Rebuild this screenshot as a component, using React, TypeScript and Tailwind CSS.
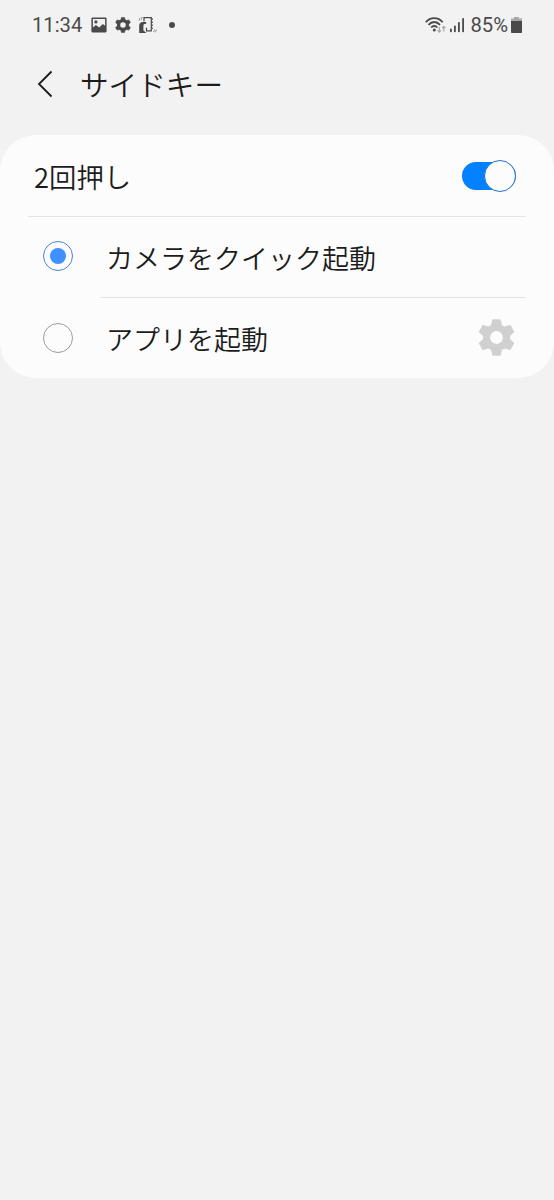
import { useState } from 'react';

const TOOTH_ANGLES = [0, 60, 120, 180, 240, 300];

function Gear({ className }: { className: string }) {
  return (
    <svg className={className} viewBox="-18.5 -18.5 37 37" fill="currentColor" stroke="currentColor">
      <circle r="10" fill="none" strokeWidth="7.200" />
      {TOOTH_ANGLES.map((angle) => (
        <path
          key={angle}
          d="M-3.500-17.600h7L4.700-12.500 6.200-9.500h-12.400l1.500-3Z"
          strokeWidth="1.400"
          strokeLinejoin="round"
          transform={`rotate(${angle})`}
        />
      ))}
    </svg>
  );
}

function StatusBar() {
  return (
    <div className="flex h-[50px] items-center pl-[32px] pr-[32px] text-[#4a4a4a]">
      <span className="w-[50px] font-[Roboto] text-[20.2px] leading-6 whitespace-nowrap">11:34</span>
      <svg className="ml-[9px] h-4 w-4 shrink-0" viewBox="0 0 16 16">
        <path
          fill="currentColor"
          fillRule="evenodd"
          d="M1.600.500h12.800c.7 0 1.200.5 1.200 1.200v12.600c0 .7-.5 1.200-1.200 1.200H1.600c-.7 0-1.200-.5-1.200-1.200V1.700C.4 1 .9.500 1.600.500ZM1.900 2v8.500l3-2.400 3.300 2.400 3.600-3.600 2.300 1.900V2ZM4.900 3.300a1.600 1.600 0 1 1 0 3.200 1.600 1.600 0 0 1 0-3.200Z"
        />
      </svg>
      <Gear className="ml-[8px] h-4 w-4 shrink-0" />
      <svg className="ml-[7px] h-5 w-5 shrink-0" viewBox="0 0 20 20" fill="none" stroke="currentColor">
        <path d="M6 6.500V2.600h7.300v13.200H8.500v-3" strokeWidth="1.200" />
        <path d="M13.500 4.200h1.300M13.500 7.200h1.300M13.500 10.200h1.300M13.500 13.200h1.300" strokeWidth="1.400" />
        <path d="M1.200 18V10.500C1.200 8.200 2.800 7 5 7h3.200v1.800H7.800C6 8.800 5.400 9.500 5.400 11v4.500L8.500 18Z" fill="currentColor" stroke="none" />
        <path d="M1 5.800l1-3M3.200 4.800l1-3M15.600 17l1-2.500M17.400 17.500l1-3" strokeWidth=".9" opacity=".6" />
      </svg>
      <span className="ml-[11px] h-[6px] w-[6px] rounded-full bg-[#4a4a4a]" />
      <span className="grow" />
      <svg className="h-[18px] w-[22px] shrink-0" viewBox="0 0 22 18" fill="none" stroke="currentColor">
        <path d="M.8 6.200C5.300.7 13.200.7 17.700 6.200M3.500 8.900C6.800 5 11.700 5 15 8.900M6.200 11.500c1.700-2 4.400-2 6.100 0" strokeWidth="1.800" />
        <circle cx="9.300" cy="14" r="1.500" fill="currentColor" stroke="none" />
        <path d="M14.300 11v5M12.600 14.300l1.700 1.800 1.700-1.800M18.800 15.500v-5M17.100 12.200l1.700-1.800 1.700 1.800" stroke="#a8a8a8" strokeWidth="1.200" />
      </svg>
      <svg className="ml-[3px] h-4 w-4 shrink-0" viewBox="0 0 16 16" fill="currentColor">
        <rect x="0" y="11.500" width="1.800" height="3.700" rx=".8" />
        <rect x="4" y="8.500" width="1.800" height="6.700" rx=".8" />
        <rect x="8" y="5" width="1.800" height="10.200" rx=".8" />
        <rect x="12.200" y="1" width="1.800" height="14.200" rx=".8" />
      </svg>
      <span className="ml-[5px] font-[Roboto] text-[20.2px] leading-6">85%</span>
      <svg className="ml-[3px] h-4 w-[11px] shrink-0" viewBox="0 0 11 16">
        <path d="M3 0h5v1.500h3V4H0V1.500h3Z" fill="#a8a8a8" />
        <path d="M0 4h11v11.200c0 .5-.3.800-.8.800H.8c-.5 0-.8-.3-.8-.8Z" fill="currentColor" />
      </svg>
    </div>
  );
}

function Radio({ checked }: { checked: boolean }) {
  return (
    <span
      className={`flex h-[30px] w-[30px] shrink-0 items-center justify-center rounded-full border-[1.5px] ${
        checked ? 'border-[#4a86cf]' : 'border-[#9c9c9c]'
      }`}
    >
      {checked && <span className="h-4 w-4 rounded-full bg-[#3e91ff]" />}
    </span>
  );
}

export default function App() {
  const [enabled, setEnabled] = useState(true);
  const [action, setAction] = useState<'camera' | 'app'>('camera');

  return (
    <div className="min-h-[1200px] w-full bg-[#f2f2f2] font-['Noto_Sans_CJK_JP',sans-serif] text-[#1c1c1c]">
      <StatusBar />
      <header className="flex h-[85px] items-start pl-[37px] pt-[14px]">
        <button aria-label="戻る" className="mt-[6px]">
          <svg className="h-7 w-4" viewBox="0 0 16 28" fill="none" stroke="currentColor" strokeWidth="1.800">
            <path d="M14.500 1.500 2 14l12.500 12.500" />
          </svg>
        </button>
        <h1 className="ml-[27px] text-[28.6px] font-[350] leading-10">サイドキー</h1>
      </header>

      <main className="h-[243px] rounded-[36px] bg-[#fcfcfc] pl-7 pr-7">
        <div className="flex h-[82px] items-center border-b border-[#e4e4e4] pl-[6px] pr-[10px]">
          <span className="grow pt-px text-[27.4px] font-[350] leading-10">2回押し</span>
          <button
            role="switch"
            aria-checked={enabled}
            aria-label="2回押し"
            onClick={() => setEnabled(!enabled)}
            className={`flex h-[28px] w-[54px] items-center rounded-full ${
              enabled ? 'justify-end bg-[#0381fe]' : 'justify-start bg-[#9c9c9c]'
            }`}
          >
            <span className="h-8 w-8 shrink-0 rounded-full border-[1.5px] border-[#2274cc] bg-[#fcfcfc]" />
          </button>
        </div>
        <button onClick={() => setAction('camera')} className="flex h-[81px] w-full items-center pl-[15px] text-left">
          <span className="pb-[3px]">
            <Radio checked={action === 'camera'} />
          </span>
          <span className="ml-[27px] flex h-full grow items-center border-b border-[#e4e4e4] pl-[6px] pt-[2px] text-[27px] font-[350] leading-10">
            カメラをクイック起動
          </span>
        </button>
        <div className="flex h-20 items-center pl-[15px] pr-[11px]">
          <button onClick={() => setAction('app')} className="flex grow items-center text-left">
            <Radio checked={action === 'app'} />
            <span className="ml-[33px] pt-[2px] text-[27px] font-[350] leading-10">アプリを起動</span>
          </button>
          <button aria-label="設定" className="pb-px">
            <Gear className="h-[37px] w-[37px] text-[#d0d0d0]" />
          </button>
        </div>
      </main>
    </div>
  );
}
